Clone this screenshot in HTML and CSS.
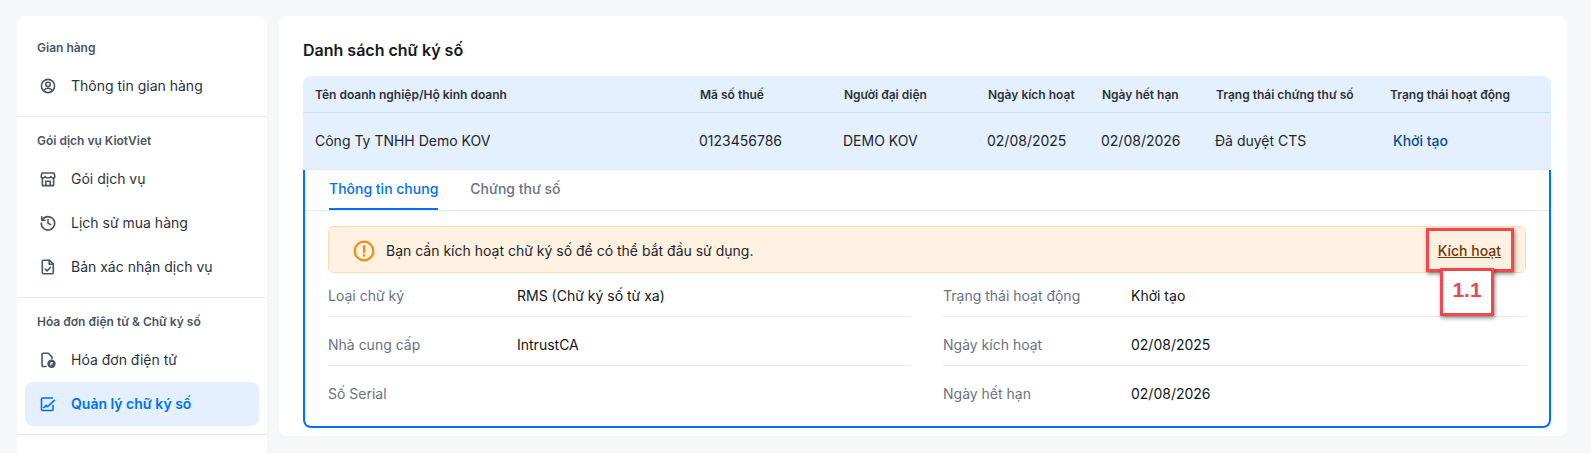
FILE: index.html
```html
<!DOCTYPE html>
<html lang="vi">
<head>
  <meta charset="UTF-8">
  <meta name="viewport" content="width=device-width, initial-scale=1.0">
  <title>Danh sách chữ ký số</title>
  <link rel="stylesheet" href="styles.css">
</head>
<body>
  <div class="layout">
    <aside class="sidebar">
      <div class="side-group">
        <div class="side-label">Gian hàng</div>
        <a class="side-item">
          <svg class="side-icon" viewBox="0 0 18 18"><circle cx="9" cy="9" r="6.6"/><circle cx="9" cy="7.4" r="2.2"/><path d="M4.6 13.6c1-1.6 2.6-2.3 4.4-2.3s3.400.7 4.400 2.300"/></svg>
          <span>Thông tin gian hàng</span>
        </a>
      </div>
      <div class="side-group">
        <div class="side-label">Gói dịch vụ KiotViet</div>
        <a class="side-item">
          <svg class="side-icon" viewBox="0 0 18 18"><path d="M3 3h12l.8 3.200c0 1-.9 1.800-1.900 1.800s-1.800-.6-2.100-1.500c-.3.900-1.300 1.500-2.800 1.500s-2.500-.6-2.800-1.500C5.900 7.400 5 8 4.100 8S2.200 7.200 2.200 6.200L3 3z"/><path d="M3.400 8v7.600h11.200V8"/><path d="M6.800 15.500v-4.200h4.400v4.200"/></svg>
          <span>Gói dịch vụ</span>
        </a>
        <a class="side-item">
          <svg class="side-icon" viewBox="0 0 18 18"><path d="M3.300 5.800A6.700 6.700 0 1 1 2.300 9"/><path d="M2.700 2.800v3.400h3.400"/><path d="M9 5.500V9l2.600 1.600"/></svg>
          <span>Lịch sử mua hàng</span>
        </a>
        <a class="side-item">
          <svg class="side-icon" viewBox="0 0 18 18"><path d="M4.500 2.300h6l3.800 3.800v8.400c0 .7-.6 1.200-1.200 1.200H4.500c-.7 0-1.200-.5-1.200-1.200v-11c0-.7.500-1.200 1.200-1.200z"/><path d="M10.200 2.500v3.800h3.900"/><path d="M6.200 11l1.900 1.900 3.500-3.600"/></svg>
          <span>Bản xác nhận dịch vụ</span>
        </a>
      </div>
      <div class="side-group">
        <div class="side-label">Hóa đơn điện tử &amp; Chữ ký số</div>
        <a class="side-item">
          <svg class="side-icon" viewBox="0 0 18 18"><path d="M7 15.500H4.200c-.7 0-1.200-.5-1.200-1.200V3.500c0-.7.500-1.200 1.200-1.200h5.200L13 6v1.500"/><circle class="fill" cx="12.500" cy="12.800" r="3.400"/><path class="cut" d="M13.500 11.600h-1.600v2.400M11.900 12.800h1.300"/></svg>
          <span>Hóa đơn điện tử</span>
        </a>
        <a class="side-item active">
          <svg class="side-icon" viewBox="0 0 18 18"><path d="M14 10.500v3.800c0 .7-.5 1.200-1.200 1.200H3.700c-.7 0-1.200-.5-1.200-1.200V4.200c0-.7.500-1.200 1.200-1.200h9.800"/><path d="M4.800 12.500c1.500-.3 1.700-2.300 2.400-2.300s.4 1.600 1.200 1.600c.8 0 2-1.800 3.100-2.900"/><path d="M11.500 8.900l3.900-3.600"/></svg>
          <span>Quản lý chữ ký số</span>
        </a>
      </div>
      <div class="side-group"></div>
    </aside>

    <main class="content">
      <h1 class="title">Danh sách chữ ký số</h1>

      <table class="sign-table">
        <colgroup>
          <col class="col-name"><col class="col-tax"><col class="col-rep"><col class="col-active"><col class="col-expire"><col class="col-cert"><col>
        </colgroup>
        <thead>
          <tr>
            <th>Tên doanh nghiệp/Hộ kinh doanh</th>
            <th>Mã số thuế</th>
            <th>Người đại diện</th>
            <th>Ngày kích hoạt</th>
            <th>Ngày hết hạn</th>
            <th>Trạng thái chứng thư số</th>
            <th>Trạng thái hoạt động</th>
          </tr>
        </thead>
        <tbody>
          <tr>
            <td>Công Ty TNHH Demo KOV</td>
            <td>0123456786</td>
            <td>DEMO KOV</td>
            <td>02/08/2025</td>
            <td>02/08/2026</td>
            <td>Đã duyệt CTS</td>
            <td><span class="status-link">Khởi tạo</span></td>
          </tr>
        </tbody>
      </table>

      <section class="detail">
        <div class="tabs">
          <div class="tab active">Thông tin chung</div>
          <div class="tab">Chứng thư số</div>
        </div>

        <div class="detail-body">
          <div class="alert">
            <svg class="alert-icon" viewBox="0 0 22 22"><circle cx="11" cy="11" r="9.300"/><path d="M11 6v6.200"/><path d="M11 15.200v.6"/></svg>
            <span class="alert-text">Bạn cần kích hoạt chữ ký số để có thể bắt đầu sử dụng.</span>
            <a class="alert-link">Kích hoạt</a>
            <div class="mark-box"></div>
            <div class="mark-label">1.1</div>
          </div>

          <div class="info-grid">
            <div class="info-row"><span class="info-key">Loại chữ ký</span><span class="info-val">RMS (Chữ ký số từ xa)</span></div>
            <div class="info-row"><span class="info-key">Trạng thái hoạt động</span><span class="info-val">Khởi tạo</span></div>
            <div class="info-row"><span class="info-key">Nhà cung cấp</span><span class="info-val">IntrustCA</span></div>
            <div class="info-row"><span class="info-key">Ngày kích hoạt</span><span class="info-val">02/08/2025</span></div>
            <div class="info-row"><span class="info-key">Số Serial</span><span class="info-val"></span></div>
            <div class="info-row"><span class="info-key">Ngày hết hạn</span><span class="info-val">02/08/2026</span></div>
          </div>
        </div>
      </section>
    </main>
  </div>
</body>
</html>
```

FILE: styles.css
```css
* {
  box-sizing: border-box;
}

html,
body {
  height: 100%;
}

body {
  margin: 0;
  overflow: hidden;
  background-color: #f6f7f9;
  color: #1f2329;
  font-family: Inter, "Noto Sans", sans-serif;
  font-size: 14px;
}

.layout {
  display: flex;
  align-items: flex-start;
  gap: 12px;
  padding: 16px 24px 0 17px;
}

/* sidebar */
.sidebar {
  flex: 0 0 250px;
  height: 437px;
  overflow: hidden;
  padding-top: 22px;
  background-color: white;
  border-radius: 8px 8px 0 0;
}

.side-group {
  padding: 0 8px 8px;
  border-bottom: 1px solid #e8eaed;
}

.side-group + .side-group {
  padding-top: 14px;
}

.side-group:last-child {
  border-bottom: none;
}

.side-label {
  height: 20px;
  margin: 0 0 6px 12px;
  color: #4b5563;
  font-size: 12px;
  font-weight: 600;
  line-height: 20px;
}

.side-item {
  display: flex;
  align-items: center;
  gap: 14px;
  height: 44px;
  padding: 0 0 2px 14px;
  border-radius: 8px;
  color: #2c323a;
  font-size: 14px;
}

.side-icon {
  flex: none;
  width: 18px;
  height: 18px;
  margin-top: 2px;
  fill: none;
  stroke: #4b5563;
  stroke-width: 1.6;
  stroke-linecap: round;
  stroke-linejoin: round;
}

.side-icon .fill {
  fill: #4b5563;
}

.side-icon .cut {
  stroke: white;
  stroke-width: 1;
}

.side-item.active {
  background-color: #e4f0fd;
  color: #0070f4;
  font-weight: 600;
}

.side-item.active .side-icon {
  stroke: #0070f4;
}

/* content */
.content {
  flex: 1;
  height: 420px;
  padding: 22px 16px 9px 24px;
  background-color: white;
  border-radius: 8px;
}

.title {
  margin: 0 0 14px;
  color: #16191d;
  font-size: 16px;
  font-weight: 600;
  line-height: 24px;
}

.sign-table {
  width: 100%;
  border-collapse: separate;
  border-spacing: 0;
  table-layout: fixed;
}

.col-name { width: 385px; }
.col-tax { width: 144px; }
.col-rep { width: 144px; }
.col-active { width: 114px; }
.col-expire { width: 114px; }
.col-cert { width: 174px; }

.sign-table th {
  height: 37px;
  padding: 0 12px;
  background-color: #e4f0fd;
  border-bottom: 1px solid #c5e0fb;
  color: #2c323a;
  font-size: 12px;
  font-weight: 600;
  text-align: left;
  white-space: nowrap;
}

.sign-table th:first-child {
  border-top-left-radius: 8px;
}

.sign-table th:last-child {
  border-top-right-radius: 8px;
}

.sign-table td {
  height: 57px;
  padding: 0 12px 2px 11px;
  background-color: #e4f0fd;
  border-bottom: 1px solid #e5e9ee;
  color: #22262c;
  font-size: 14px;
  white-space: nowrap;
}

.sign-table td:first-child {
  padding-left: 12px;
}

.status-link {
  margin-left: 4px;
  color: #0b4a96;
  font-weight: 500;
}

/* expanded row */
.detail {
  height: 258px;
  border: 2px solid #0070f4;
  border-top: none;
  border-radius: 0 0 8px 8px;
}

.tabs {
  display: flex;
  gap: 32px;
  height: 41px;
  padding-left: 24px;
  border-bottom: 1px solid #e8eaed;
}

.tab {
  height: 40px;
  color: #6b7280;
  font-size: 14px;
  font-weight: 500;
  line-height: 38px;
}

.tab.active {
  color: #0070f4;
  border-bottom: 2px solid #0070f4;
}

.detail-body {
  padding: 15px 23px 0;
}

.alert {
  position: relative;
  display: flex;
  align-items: center;
  height: 47px;
  padding: 2px 24px 0;
  background-color: #fff1e2;
  border: 1px solid #fedcb0;
  border-radius: 6px;
}

.alert-icon {
  flex: none;
  width: 22px;
  height: 22px;
  margin-right: 11px;
  fill: none;
  stroke: #f88a0a;
  stroke-width: 2.2;
  stroke-linecap: round;
}

.alert-text {
  flex: 1;
  color: #22262c;
  font-size: 14px;
}

.alert-link {
  color: #6e3700;
  font-size: 14px;
  font-weight: 500;
  text-decoration: underline;
}

.mark-box {
  position: absolute;
  top: 1px;
  right: 11px;
  width: 88px;
  height: 44px;
  border: 3px solid #f2474d;
  box-shadow: 1px 2px 4px rgba(0, 0, 0, 0.45);
}

.mark-label {
  position: absolute;
  top: 41px;
  right: 31px;
  width: 54px;
  height: 48px;
  background-color: white;
  border: 3px solid #f2474d;
  box-shadow: 1px 2px 4px rgba(0, 0, 0, 0.45);
  color: #f2474d;
  font-family: "Liberation Sans", Arial, sans-serif;
  font-size: 21px;
  font-weight: 700;
  line-height: 38px;
  text-align: center;
}

.info-grid {
  display: grid;
  grid-template-columns: 1fr 1fr;
  column-gap: 32px;
  row-gap: 18px;
  margin-top: 13px;
}

.info-row {
  display: flex;
  height: 31px;
  padding-bottom: 10px;
  border-bottom: 1px solid #e8eaed;
  line-height: 20px;
}

.info-row:nth-last-child(-n+2) {
  border-bottom: none;
}

.info-key {
  flex: 0 0 188px;
  color: #6b7280;
  font-size: 14px;
}

.info-row:nth-child(odd) .info-key {
  flex-basis: 189px;
}

.info-val {
  color: #111418;
  font-size: 14px;
}
```
